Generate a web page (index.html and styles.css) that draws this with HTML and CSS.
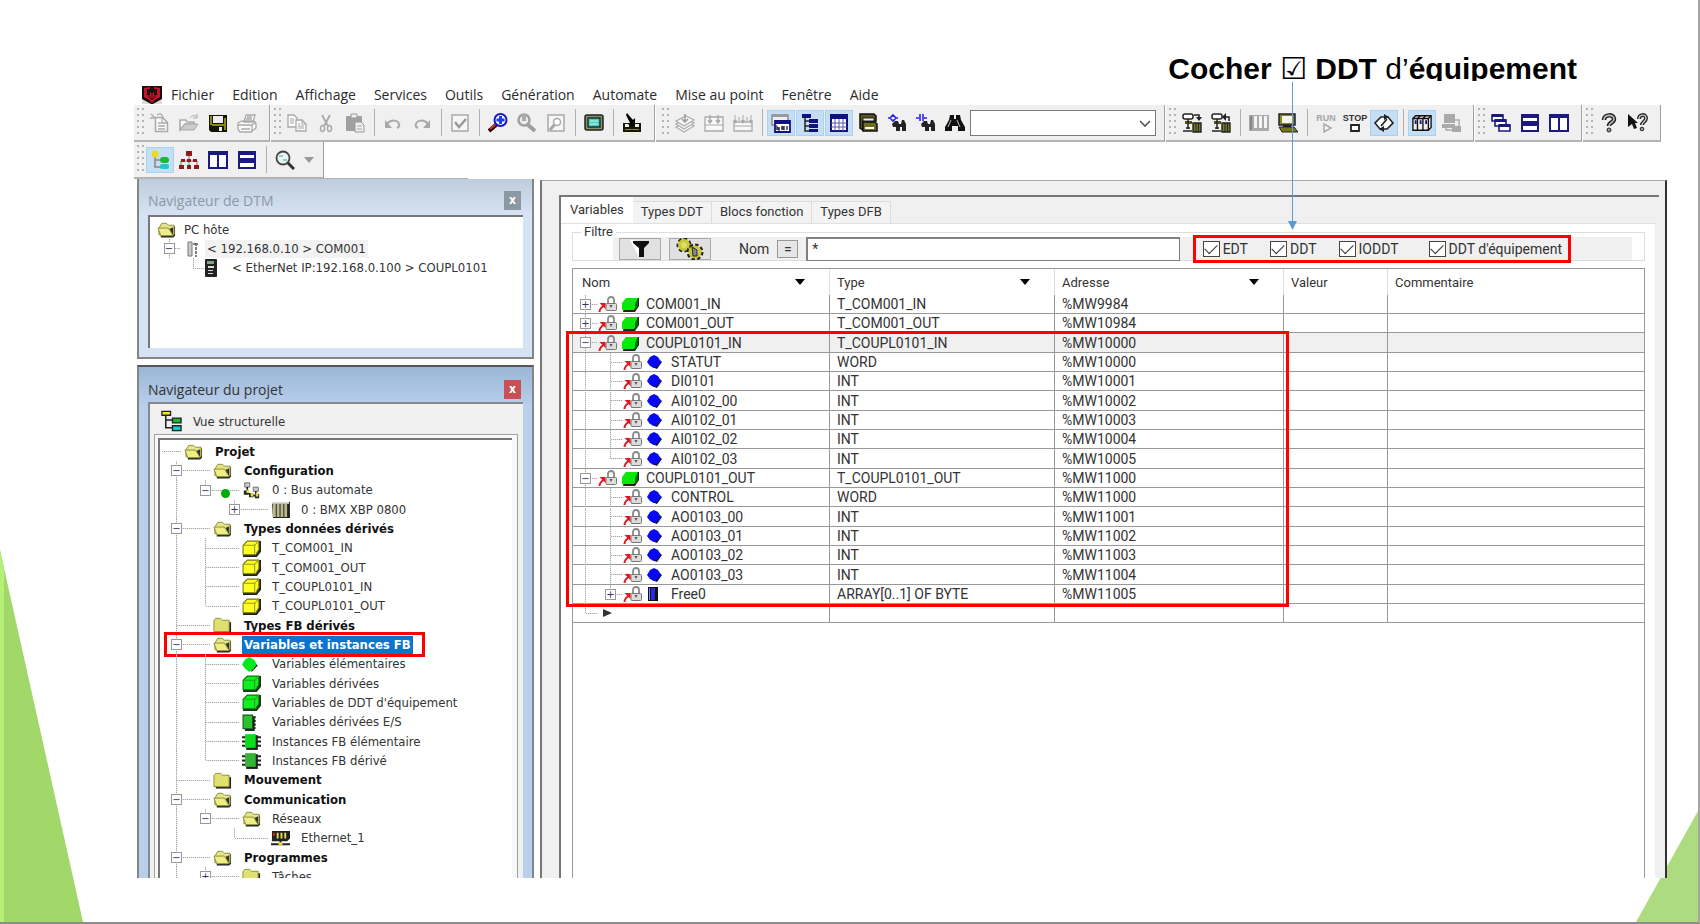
FILE: index.html
```html
<!DOCTYPE html>
<html lang="fr">
<head>
    <meta charset="UTF-8">
    <meta name="viewport" content="width=device-width, initial-scale=1.0">
    <title>Variables DDT</title>
    <link rel="stylesheet" href="styles.css">
</head>
<body>

    <!-- icon set -->
    <svg class="defs" aria-hidden="true">
        <symbol id="logo" viewBox="0 0 20 18"><path fill="#ddd" d="M0 0h20v18H0z"/><path fill="#181010" d="M0 0h20v13l-9 5h-2L0 13z"/><path fill="#c4152a" d="M2 2l6-1v2H5v6h3V6l2 2 2-2v3h3V3h-3V1l6 1v9l-5 3-3 3-3-3-5-3z"/><path stroke="#3c0b10" fill="none" d="M7 4v7l3 3 3-3V4M10 8v6"/></symbol>
        <symbol id="new" viewBox="0 0 20 20"><path fill="#fafafa" stroke="#a9a9a9" stroke-width="1.5" d="M5.500 4.500h7l5 5v9h-12z"/><path fill="none" stroke="#a9a9a9" stroke-width="1.300" d="M12 5v5h5M8 10h3M8 13h7M8 16h7M1 1l4 4M0 5h4M7 2c3-2 5-1 6 2"/></symbol>
        <symbol id="open" viewBox="0 0 20 20"><path fill="#fafafa" stroke="#a9a9a9" stroke-width="1.500" d="M1 17V7h6l1 2h7v2H6z"/><path fill="#ccc" stroke="#a9a9a9" d="M1 17l5-6h13l-4 6z"/><path fill="none" stroke="#a9a9a9" d="M11 5c2-3 5-3 7-1m0-3v4h-4"/></symbol>
        <symbol id="save" viewBox="0 0 20 20"><path fill="#141400" d="M1 2h18v17H3l-2-2z"/><path fill="#8a8a1c" d="M2 3h2v9H2zM16 5h2v12h-2zM4 11h12v2H4z"/><path fill="#eee" d="M5 3h10v7H5zM11 14h3v4h-3z"/></symbol>
        <symbol id="print" viewBox="0 0 20 20"><path fill="#fafafa" stroke="#a9a9a9" stroke-width="1.300" d="M7 9l2-7h9l-2 7zM1 10l4-2h12l2 3v4l-5 4H3l-2-3z"/><path fill="none" stroke="#a9a9a9" stroke-width="1.300" d="M10 4h5M9 6h6M1 12h14l4-3M4 16h9M15 12v6"/></symbol>
        <symbol id="copy" viewBox="0 0 20 20"><path fill="#fafafa" stroke="#a9a9a9" stroke-width="1.300" d="M1 2h6l3 3v9H1z"/><path fill="none" stroke="#a9a9a9" d="M3 6h4M3 8h4M3 10h4"/><path fill="#fafafa" stroke="#a9a9a9" stroke-width="1.300" d="M9 7h6l4 4v7H9z"/><path fill="none" stroke="#a9a9a9" d="M15 7v4h4M11 11h2M11 13h6M11 15h6"/></symbol>
        <symbol id="cut" viewBox="0 0 20 20"><path fill="none" stroke="#a9a9a9" stroke-width="1.800" d="M6 2l6 11M14 2L8 13"/><ellipse cx="6.500" cy="15.500" rx="2" ry="3" fill="none" stroke="#a9a9a9" stroke-width="1.500"/><ellipse cx="13.500" cy="15.500" rx="2" ry="3" fill="none" stroke="#a9a9a9" stroke-width="1.500"/></symbol>
        <symbol id="paste" viewBox="0 0 20 20"><rect x="1" y="3" width="16" height="15" rx="1" fill="#a0a0a0"/><path fill="#eee" stroke="#999" d="M6 1h6v4H6zM10 9h6l3 3v7h-9z"/><path stroke="#aaa" d="M12 13h5M12 16h5"/></symbol>
        <symbol id="undo" viewBox="0 0 20 20"><path fill="none" stroke="#a9a9a9" stroke-width="2" d="M4 11c4-5 11-4 12 0 1 2 0 3-2 4"/><path fill="#a9a9a9" d="M2 7v8h7z"/></symbol>
        <symbol id="redo" viewBox="0 0 20 20"><path fill="none" stroke="#a9a9a9" stroke-width="2" d="M16 11C12 6 5 7 4 11c-1 2 0 3 2 4"/><path fill="#a9a9a9" d="M18 7v8h-7z"/></symbol>
        <symbol id="valid" viewBox="0 0 20 20"><path fill="#f6f6f6" stroke="#a9a9a9" stroke-width="1.500" d="M2 2h16v16H2z"/><path fill="none" stroke="#999" stroke-width="2.500" d="M5 9l4 5 7-8"/></symbol>
        <symbol id="zoomin" viewBox="0 0 20 20"><path stroke="#200" stroke-width="4" d="M1 18l8-7"/><path stroke="#c33" stroke-width="2" d="M2 16l6-5"/><circle cx="12.500" cy="7" r="6" fill="#fff" stroke="#1414c8" stroke-width="2"/><path stroke="#1a3cff" stroke-width="3" d="M12.500 3v8M8.500 7h8"/></symbol>
        <symbol id="zoomoff" viewBox="0 0 20 20"><path stroke="#a0a0a0" stroke-width="4" d="M10 11l8 7"/><circle cx="7" cy="7" r="5.500" fill="#eee" stroke="#a0a0a0" stroke-width="2.500"/><path fill="#aaa" d="M5 1h4v7H5z"/></symbol>
        <symbol id="zoompage" viewBox="0 0 20 20"><path fill="#f6f6f6" stroke="#a9a9a9" stroke-width="1.500" d="M2 2h16v16H2z"/><path stroke="#a9a9a9" stroke-width="3" d="M4 17l5-6"/><circle cx="11" cy="9" r="3.500" fill="#fff" stroke="#a9a9a9" stroke-width="1.500"/></symbol>
        <symbol id="screen" viewBox="0 0 20 20"><rect x="1" y="2" width="18" height="15" rx="2" fill="#8f8f66" stroke="#222" stroke-width="1.500"/><path fill="#58c8b8" stroke="#0a3a3a" stroke-width="1.500" d="M4 5h12v9H4z"/><path stroke="#bff" d="M6 8h8M6 11h8"/></symbol>
        <symbol id="download" viewBox="0 0 20 20"><path fill="#171700" d="M1 10h18v9H1z"/><path fill="#f0f0f0" d="M3 11h4v3H3zM13 11h4v3h-4z"/><path fill="#8a8a2c" d="M3 16h14v1H3z"/><path fill="#000" d="M5 0l6 7 2-2v8l-7-1 2-2-4-8z"/></symbol>
        <symbol id="layers" viewBox="0 0 20 20"><g fill="#f8f8f8" stroke="#aaa" stroke-width="1.200"><path d="M1 14l10-5 8 4-10 6z"/><path d="M1 11l10-5 8 4-10 6z"/><path d="M1 8l10-5 8 4-10 6z"/></g><path fill="none" stroke="#999" stroke-width="1.500" d="M10 1v7M7 6l3 3 3-3"/></symbol>
        <symbol id="import1" viewBox="0 0 20 20"><path fill="#f8f8f8" stroke="#aaa" stroke-width="1.300" d="M1 4h18v14H1z"/><path stroke="#aaa" d="M1 12h18"/><path fill="none" stroke="#aaa" stroke-width="1.500" d="M6 2v7M4 7l2 3 2-3M14 2v7M12 7l2 3 2-3"/></symbol>
        <symbol id="import2" viewBox="0 0 20 20"><path fill="#f8f8f8" stroke="#aaa" stroke-width="1.300" d="M1 9h18v9H1z"/><path stroke="#aaa" d="M1 13h18M2 2v8M10 2v8M18 2v8M6 4v4M14 4v4"/><path fill="#aaa" d="M0 7h4l-2 4zM8 7h4l-2 4zM16 7h4l-2 4z"/></symbol>
        <symbol id="win" viewBox="0 0 20 20"><path fill="#eee" stroke="#888" stroke-width="1.400" d="M1 2h16v10H1z"/><path fill="#999" d="M1 2h16v2H1z"/><path fill="#fff" stroke="#101080" stroke-width="1.800" d="M4 8h15v11H4z"/><path fill="#101080" d="M4 8h15v3H4z"/><path fill="none" stroke="#333" stroke-width="1.500" d="M6 17v-3l2 3v-3M11 17v-4l2 4v-4M16 17v-4"/></symbol>
        <symbol id="arbo" viewBox="0 0 20 20"><path fill="#101080" d="M2 1h9v4H2zM9 6h9v4H9zM9 11h9v4H9zM9 16h9v3H9z"/><path fill="none" stroke="#222" stroke-width="1.500" d="M5 5v13h4M5 8h4M5 13h4"/></symbol>
        <symbol id="grid" viewBox="0 0 20 20"><path fill="#fff" stroke="#101080" stroke-width="2" d="M2 2h16v16H2z"/><path fill="#101080" d="M2 2h16v4H2z"/><path stroke="#5a5ab0" d="M2 10h16M2 14h16M6 6v12M10 6v12M14 6v12"/></symbol>
        <symbol id="books" viewBox="0 0 20 20"><path fill="#55551c" stroke="#111" stroke-width="1.500" d="M2 1h14l2 2v5H5v9L2 15z"/><path fill="#eee" stroke="#222" d="M5 5h11v3H5z"/><path fill="#6d6d22" stroke="#111" stroke-width="1.500" d="M5 9h12l2 2v7H5z"/><path fill="#fff" d="M7 14h9v2H7z"/></symbol>
        <symbol id="find1" viewBox="0 0 20 20"><path fill="none" stroke="#2525ee" stroke-width="1.600" d="M1 5h2l3-3 3 3h2M3 5l3 3 3-3"/><path fill="#222" d="M5 11l3-3h3l1 3h2l1-4h2l2 4v7h-4v-4h-2v4H9v-4H6z"/></symbol>
        <symbol id="find2" viewBox="0 0 20 20"><path fill="none" stroke="#2525ee" stroke-width="1.600" d="M0 5h3M4 1v7M7 1v7M8 5h3"/><path fill="#222" d="M5 11l3-3h3l1 3h2l1-4h2l2 4v7h-4v-4h-2v4H9v-4H6z"/></symbol>
        <symbol id="bino" viewBox="0 0 20 20"><path fill="#111" d="M5 2h4v4h2V2h4l1 5 4 7v4h-7v-5H7v5H0v-4l4-7z"/><path stroke="#bbb" d="M6 7l-3 7M12 7l3 7"/></symbol>
        <symbol id="net1" viewBox="0 0 20 20"><rect x="1" y="1" width="10" height="5" rx="2" fill="#fff" stroke="#222" stroke-width="1.500"/><path fill="#55551c" d="M3 8h7v3H3z"/><path fill="none" stroke="#222" stroke-width="1.500" d="M6 6v10M1 18h9M4 15h4M12 2h5v5"/><path fill="#222" d="M14 4h6l-3 4z"/><path fill="#77772a" stroke="#222" stroke-width="1.400" d="M11 10h8v9h-8z"/><path stroke="#222" d="M14 10v9M16.500 10v9"/></symbol>
        <symbol id="net2" viewBox="0 0 20 20"><rect x="1" y="1" width="10" height="5" rx="2" fill="#fff" stroke="#222" stroke-width="1.500"/><path fill="#55551c" d="M3 8h7v3H3z"/><path fill="none" stroke="#222" stroke-width="1.500" d="M6 6v10M1 18h9M4 15h4M13 4h5v4"/><path fill="#222" d="M15 0v8l-4-4z"/><path fill="#77772a" stroke="#222" stroke-width="1.400" d="M11 10h8v9h-8z"/><path stroke="#222" d="M14 10v9M16.500 10v9"/></symbol>
        <symbol id="bars" viewBox="0 0 20 20"><path fill="#aaa" d="M0 2h20v16H0z"/><path fill="#f4f4f4" d="M5 3h3v12H5zM10 3h3v12h-3zM15 3h3v12h-3z"/><path fill="#888" d="M1 3h2v14H1z"/></symbol>
        <symbol id="pc" viewBox="0 0 20 20"><path fill="#8a8a14" stroke="#222" stroke-width="1.500" d="M1 1h16v11H1z"/><path fill="#f6f6e8" d="M4 3h10v7H4z"/><path fill="#77771a" stroke="#222" d="M1 14h15l4 5H4z"/><path fill="#222" d="M5 12h8v2H5z"/></symbol>
        <symbol id="play" viewBox="0 0 20 10"><path fill="#f6f6f6" stroke="#aaa" stroke-width="1.500" d="M8 1l7 4-7 4z"/></symbol>
        <symbol id="stop" viewBox="0 0 20 10"><path fill="#fff" stroke="#222" stroke-width="1.800" d="M6 2h8v6H6z"/></symbol>
        <symbol id="sync" viewBox="0 0 20 20"><path fill="#fff" stroke="#222" stroke-width="1.600" d="M8 16H6l-5-6 6-6h4M12 4h2l5 6-6 6H9M7 13l6-7"/><path fill="#222" d="M10 1l5 3-5 3zM10 13l-5 3 5 3z"/></symbol>
        <symbol id="rack" viewBox="0 0 22 20"><path fill="#eee" stroke="#111" stroke-width="1.500" d="M1 5l3-3h17v13l-3 3H1z"/><path fill="none" stroke="#111" stroke-width="1.500" d="M1 5h17v13M6 5v13M12 5v13M18 5l3-3M6 5l3-3M12 5l3-3"/><path stroke="#101080" stroke-width="2" d="M4 7v4M9.500 7v4M15.500 7v4"/></symbol>
        <symbol id="pcoff" viewBox="0 0 20 20"><path fill="#aaa" d="M3 1h11v9H3zM1 11h13v4H1zM11 13h9v6h-9z"/><path fill="none" stroke="#aaa" stroke-width="1.500" d="M14 7h4v6M5 14v3h6"/></symbol>
        <symbol id="cascade" viewBox="0 0 20 20"><g fill="#fff" stroke="#1a1a80" stroke-width="1.600"><path d="M1 2h11v6H1z"/><path d="M4 7h11v6H4z"/><path d="M8 12h11v6H8z"/></g><path fill="#1a1a80" d="M1 1h11v3H1zM4 6h11v3H4zM8 11h11v3H8z"/></symbol>
        <symbol id="tileh" viewBox="0 0 20 20"><path fill="#fff" stroke="#1a1a80" stroke-width="2" d="M2 2h16v7H2zM2 11h16v7H2z"/><path fill="#1a1a80" d="M2 2h16v3H2zM2 10h16v3H2z"/></symbol>
        <symbol id="tilev" viewBox="0 0 20 20"><path fill="#fff" stroke="#1a1a80" stroke-width="2" d="M1 2h9v16H1zM10 2h9v16h-9z"/><path fill="#1a1a80" d="M1 1h18v4H1z"/></symbol>
        <symbol id="help" viewBox="0 0 20 20"><path fill="none" stroke="#222" stroke-width="4.500" d="M5 7c0-6 10-6 10-1 0 4-5 3-5 7"/><path fill="none" stroke="#bbb" stroke-width="1.600" d="M5 7c0-6 10-6 10-1 0 4-5 3-5 7"/><circle cx="10" cy="17" r="2" fill="#999" stroke="#222"/></symbol>
        <symbol id="helpptr" viewBox="0 0 20 20"><path fill="none" stroke="#222" stroke-width="4" d="M11 6c0-5 7-5 7-1 0 4-4 4-4 7"/><path fill="none" stroke="#ccc" stroke-width="1.400" d="M11 6c0-5 7-5 7-1 0 4-4 4-4 7"/><circle cx="14" cy="16" r="1.800" fill="#999" stroke="#222"/><path fill="#111" d="M0 1l10 9H7l2 5-3 1-2-5-4 3z"/></symbol>
        <symbol id="vtree" viewBox="0 0 20 20"><path fill="none" stroke="#888" stroke-width="1.500" d="M5 5v12h6M5 10h6"/><circle cx="5" cy="4" r="3.500" fill="#e8dc1c"/><rect x="10" y="7" width="9" height="6" rx="3" fill="#18b838"/><rect x="10" y="14" width="9" height="5" rx="2" fill="#1cc8c8"/></symbol>
        <symbol id="org" viewBox="0 0 20 20"><path fill="none" stroke="#777" d="M10 5v12M2 11h16M2 11v6M18 11v6"/><path fill="#981818" d="M7 1h6v5H7zM2 9h4v3H2zM8 9h4v3H8zM14 9h4v3h-4zM0 15h5v4H0zM8 15h4v4H8zM15 15h5v4h-5z"/></symbol>
        <symbol id="loupe" viewBox="0 0 20 20"><path stroke="#333" stroke-width="3" d="M12 12l7 7"/><circle cx="8" cy="8" r="6.500" fill="#eaf6f4" stroke="#444" stroke-width="1.800"/><path stroke="#3aa" stroke-width="1.200" d="M4 6h4M8 10h4"/></symbol>
        <symbol id="folder" viewBox="0 0 20 17"><path fill="#222" d="M4 5h15v10l-2 2H4z"/><path fill="#e4e48a" stroke="#8d8d3a" d="M2 7l3-5h5l2 2h6v10H2z"/><path fill="#333" d="M13 8l4 7V6z"/><path fill="#eeee84" stroke="#8d8d3a" d="M1 7h11l5 8H4z"/></symbol>
        <symbol id="closed" viewBox="0 0 20 17"><path fill="#222" d="M3 5h16v12H3z"/><path fill="#e0e070" stroke="#8d8d3a" d="M1 15V3l2-2h5l2 2h7v12z"/></symbol>
        <symbol id="bus" viewBox="0 0 20 20"><path fill="#ccc" stroke="#666" d="M2 1h6v5H2zM12 6h6v5h-6z"/><path fill="none" stroke="#222" stroke-width="2" d="M5 6v7l6 3h7M15 11v4"/><path fill="#222" d="M1 10h5v5H1zM7 13h5v5H7zM14 14h5v5h-5z"/><path fill="#dd3" d="M4 9h3v4H4zM9 13h3v4H9zM15 13h3v4h-3z"/></symbol>
        <symbol id="module" viewBox="0 0 20 18"><path fill="#222" d="M1 1h19v17H2z"/><path fill="#b9b98a" d="M2 3h3v14H2zM6 3h3v14H6zM10 3h3v14h-3zM14 3h3v14h-3z"/><path fill="#ddd" d="M1 1h18v2H1z"/></symbol>
        <symbol id="ycube" viewBox="0 0 18 16"><path fill="#222" d="M5 1h13v10l-4 5H1V6z"/><path fill="#ff2" stroke="#77771a" d="M1 5l4-4h11v8l-3 5H1z"/><path fill="none" stroke="#99991a" d="M1 5h11l4-4M12 5v9"/></symbol>
        <symbol id="gcube" viewBox="0 0 18 16"><path fill="#183818" d="M5 1h13v10l-4 5H1V6z"/><path fill="#10f020" stroke="#157015" d="M1 5l4-4h11v8l-3 5H1z"/><path fill="none" stroke="#20a020" d="M1 5h11l4-4M12 5v9"/></symbol>
        <symbol id="cube" viewBox="0 0 18 16"><path fill="#222" d="M5 2h13v8l-4 6H2z"/><path fill="#0ae80a" d="M1 7l4-5h12l-2 9-2 3H1z"/><path fill="#067006" d="M14 8l3-6v8l-3 4z"/></symbol>
        <symbol id="gdot" viewBox="0 0 18 16"><path fill="#222" d="M8 3l7 6-6 6z"/><path fill="#0de61a" d="M7 1l5 3 2 4-3 4-4 3-4-3-3-4 3-5z"/></symbol>
        <symbol id="gmod" viewBox="0 0 18 16"><path fill="#222" d="M1 2h11v14H3z"/><path fill="#2bc32b" stroke="#175817" d="M1 1h9v13H1z"/><path stroke="#222" stroke-width="2" stroke-dasharray="2 1.500" d="M12 2v12"/></symbol>
        <symbol id="chip" viewBox="0 0 18 16"><path stroke="#222" stroke-width="2" d="M0 4h18M0 8h18M0 12h18"/><path fill="#222" d="M4 2h11v14H4z"/><path fill="#0cdc1c" d="M3 1h10v13H3z"/></symbol>
        <symbol id="chip2" viewBox="0 0 18 16"><path stroke="#222" stroke-width="2" d="M0 4h18M0 8h18M0 12h18"/><path fill="#222" d="M4 2h11v14H4z"/><path fill="#35b535" d="M3 1h10v13H3z"/></symbol>
        <symbol id="eth" viewBox="0 0 20 16"><path fill="#222" d="M1 0h19v8l-3 3H1z"/><path fill="#e6dc50" d="M6 2h2v6H6zM10 2h2v6h-2zM14 2h2v6h-2z"/><path fill="#e22" d="M2 2h2v3H2z"/><path stroke="#222" stroke-width="2" d="M10 10v5M0 14h20"/><path fill="#dd3" d="M8 12h4v3H8z"/></symbol>
        <symbol id="ports" viewBox="0 0 12 18"><path fill="#ccc" stroke="#777" d="M1 2h4v14H1z"/><path fill="none" stroke="#555" stroke-width="1.500" stroke-dasharray="3 1" d="M9 3v14M6 4h5"/></symbol>
        <symbol id="device" viewBox="0 0 12 18"><rect width="12" height="18" rx="1" fill="#222"/><path fill="#7ca57c" d="M2 2h7v3H2z"/><path fill="#ddd" d="M3 7h6v2H3zM3 11h5v1H3zM3 14h5v1H3z"/></symbol>
        <symbol id="struct" viewBox="0 0 22 22"><path fill="none" stroke="#222" stroke-width="1.600" d="M5 5v13h7M5 10h7"/><path fill="#ee1" stroke="#222" stroke-width="1.400" d="M1 1h9v4H1z"/><path fill="#1b3" stroke="#222" stroke-width="1.400" d="M12 8h9v5h-9z"/><path fill="#1cc" stroke="#222" stroke-width="1.400" d="M12 16h9v5h-9z"/></symbol>
        <symbol id="lock" viewBox="0 0 19 16"><path fill="none" stroke="#8a8a8a" stroke-width="1.800" d="M9.500 8V4c0-4 6-4 6 0v4"/><rect x="7.500" y="7.500" width="10.500" height="7" rx="1" fill="#dcdcdc" stroke="#777"/><path fill="#555" d="M11 9h3l-1.500 3z"/><path fill="none" stroke="#e5141e" stroke-width="2" d="M1 16c0-3 1-4 4-6"/><path fill="#e5141e" d="M1 7h6v6z"/></symbol>
        <symbol id="bdot" viewBox="0 0 16 16"><path fill="#112" d="M9 3l6 5-5 7-5-2z"/><path fill="#0808f4" d="M7 1l4 2 3 5-3 4-4 2-4-2-3-4 3-5z"/></symbol>
        <symbol id="array" viewBox="0 0 16 16"><path fill="#111" d="M1 1h10v14H1z"/><path fill="#2828e8" d="M4 2h4v12H4z"/><path stroke="#88f" d="M2.500 2v12"/></symbol>
        <symbol id="funnel" viewBox="0 0 20 18"><path fill="#fff" d="M0 0h5l4 8v9z"/><path fill="#111" d="M3 1h16v2l-5 5v9H9V8L3 3z"/></symbol>
        <symbol id="gears" viewBox="0 0 30 22"><circle cx="9" cy="7" r="5.500" fill="#dddc72" stroke="#222" stroke-width="4" stroke-dasharray="3 2"/><circle cx="9" cy="7" r="4.500" fill="none" stroke="#c9c832" stroke-width="3"/><circle cx="20" cy="14" r="6.500" fill="#dddc72" stroke="#222" stroke-width="4" stroke-dasharray="3 2"/><circle cx="20" cy="14" r="5" fill="#ddd" stroke="#c9c832" stroke-width="3"/><path fill="#888" stroke="#222" d="M17 9l5 3v6h-4z"/></symbol>
        <symbol id="down" viewBox="0 0 10 6"><path d="M0 0h10L5 6z"/></symbol>
        <symbol id="chev" viewBox="0 0 12 8"><path fill="none" stroke="#555" stroke-width="1.600" d="M1 1l5 5 5-5"/></symbol>
    </svg>

    <div class="slide">
        <svg class="wedge-left" viewBox="0 0 83 372" preserveAspectRatio="none"><path fill="#a2d76a" d="M0 0l83 372H0z"/><path fill="#b4f075" d="M0 0l4 18v354H0z"/></svg>
        <svg class="wedge-right" viewBox="0 0 62 111" preserveAspectRatio="none"><path fill="#addb7f" d="M62 0v111H0z"/></svg>

        <h1 class="note">Cocher <span class="tick">☑</span> DDT <span class="light">d’</span>équipement</h1>

        <div class="app">
            <nav class="menu">
                <svg class="logo"><use href="#logo"/></svg>
                <a href="#">Fichier</a>
                <a href="#">Edition</a>
                <a href="#">Affichage</a>
                <a href="#">Services</a>
                <a href="#">Outils</a>
                <a href="#">Génération</a>
                <a href="#">Automate</a>
                <a href="#">Mise au point</a>
                <a href="#">Fenêtre</a>
                <a href="#">Aide</a>
            </nav>

            <div class="toolbar">
                <div class="group">
                    <span class="grip"></span>
                    <button aria-label="Nouveau"><svg><use href="#new"/></svg></button>
                    <button aria-label="Ouvrir"><svg><use href="#open"/></svg></button>
                    <button aria-label="Enregistrer"><svg><use href="#save"/></svg></button>
                    <button aria-label="Imprimer"><svg><use href="#print"/></svg></button>
                </div>
                <div class="group">
                    <span class="grip"></span>
                    <button aria-label="Copier"><svg><use href="#copy"/></svg></button>
                    <button aria-label="Couper"><svg><use href="#cut"/></svg></button>
                    <button aria-label="Coller"><svg><use href="#paste"/></svg></button>
                    <span class="sep"></span>
                    <button aria-label="Annuler"><svg><use href="#undo"/></svg></button>
                    <button aria-label="Rétablir"><svg><use href="#redo"/></svg></button>
                    <span class="sep"></span>
                    <button aria-label="Valider"><svg><use href="#valid"/></svg></button>
                    <span class="sep"></span>
                    <button aria-label="Zoom avant"><svg><use href="#zoomin"/></svg></button>
                    <button aria-label="Zoom arrière"><svg><use href="#zoomoff"/></svg></button>
                    <button aria-label="Zoom page"><svg><use href="#zoompage"/></svg></button>
                    <span class="sep"></span>
                    <button aria-label="Plein écran"><svg><use href="#screen"/></svg></button>
                    <span class="sep"></span>
                    <button aria-label="Transférer"><svg><use href="#download"/></svg></button>
                </div>
                <div class="group wide">
                    <span class="grip"></span>
                    <button aria-label="Analyser"><svg><use href="#layers"/></svg></button>
                    <button aria-label="Générer"><svg><use href="#import1"/></svg></button>
                    <button aria-label="Regénérer"><svg><use href="#import2"/></svg></button>
                    <span class="sep"></span>
                    <button class="on" aria-label="Fenêtre de sortie"><svg><use href="#win"/></svg></button>
                    <button class="on" aria-label="Navigateur"><svg><use href="#arbo"/></svg></button>
                    <button class="on" aria-label="Editeur de données"><svg><use href="#grid"/></svg></button>
                    <button aria-label="Bibliothèque"><svg><use href="#books"/></svg></button>
                    <button aria-label="Références"><svg><use href="#find1"/></svg></button>
                    <button aria-label="Contacts"><svg><use href="#find2"/></svg></button>
                    <button aria-label="Rechercher"><svg><use href="#bino"/></svg></button>
                    <span class="combo">
                        <select aria-label="Texte à rechercher"><option></option></select>
                        <svg><use href="#chev"/></svg>
                    </span>
                </div>
                <div class="group">
                    <span class="grip"></span>
                    <button aria-label="Connexion"><svg><use href="#net1"/></svg></button>
                    <button aria-label="Déconnexion"><svg><use href="#net2"/></svg></button>
                    <span class="sep"></span>
                    <button aria-label="Mode standard"><svg><use href="#bars"/></svg></button>
                    <button aria-label="Mode simulation"><svg><use href="#pc"/></svg></button>
                    <span class="sep"></span>
                    <button class="run off"><span>RUN</span><svg><use href="#play"/></svg></button>
                    <button class="run"><span>STOP</span><svg><use href="#stop"/></svg></button>
                    <button class="on" aria-label="Animation"><svg><use href="#sync"/></svg></button>
                    <span class="sep"></span>
                    <button class="on" aria-label="Rack"><svg><use href="#rack"/></svg></button>
                    <button aria-label="Poste"><svg><use href="#pcoff"/></svg></button>
                </div>
                <div class="group">
                    <span class="grip"></span>
                    <button aria-label="Cascade"><svg><use href="#cascade"/></svg></button>
                    <button aria-label="Mosaïque horizontale"><svg><use href="#tileh"/></svg></button>
                    <button aria-label="Mosaïque verticale"><svg><use href="#tilev"/></svg></button>
                </div>
                <div class="group">
                    <span class="grip"></span>
                    <button aria-label="Aide"><svg><use href="#help"/></svg></button>
                    <button aria-label="Aide contextuelle"><svg><use href="#helpptr"/></svg></button>
                </div>
            </div>

            <div class="toolbar second">
                <div class="group">
                    <span class="grip"></span>
                    <button class="on" aria-label="Vue structurelle"><svg><use href="#vtree"/></svg></button>
                    <button aria-label="Vue fonctionnelle"><svg><use href="#org"/></svg></button>
                    <button aria-label="Vues côte à côte"><svg><use href="#tilev"/></svg></button>
                    <button aria-label="Vues superposées"><svg><use href="#tileh"/></svg></button>
                    <span class="sep"></span>
                    <button aria-label="Zoom"><svg><use href="#loupe"/></svg></button>
                    <button class="drop" aria-label="Niveau de zoom"><svg><use href="#down"/></svg></button>
                </div>
            </div>

            <div class="main">
                <aside class="dock">
                    <section class="panel dtm">
                        <header><h2>Navigateur de DTM</h2><button aria-label="Fermer">x</button></header>
                        <ul class="tree dtm-tree">
                            <li><svg class="ico"><use href="#folder"/></svg><span class="txt">PC hôte</span></li>
                            <li><span class="g t"><button class="tg">−</button></span><svg class="thin ports"><use href="#ports"/></svg><span class="txt hot">&lt; 192.168.0.10 &gt; COM001</span></li>
                            <li><span class="g"></span><span class="g e"></span><svg class="thin"><use href="#device"/></svg><span class="txt far">&lt; EtherNet IP:192.168.0.100 &gt; COUPL0101</span></li>
                        </ul>
                    </section>

                    <section class="panel project">
                        <header><h2>Navigateur du projet</h2><button aria-label="Fermer">x</button></header>
                        <div class="view">
                            <div class="view-name"><svg><use href="#struct"/></svg>Vue structurelle</div>
                            <div class="frame">
                                <ul class="tree">
                                    <li><span class="lead"></span><svg class="ico"><use href="#folder"/></svg><b class="txt">Projet</b></li>
                                    <li><span class="g t"><button class="tg">−</button></span><span class="lead"></span><svg class="ico"><use href="#folder"/></svg><b class="txt">Configuration</b></li>
                                    <li><span class="g v"></span><span class="g e"><button class="tg">−</button></span><span class="lead dot"></span><svg class="ico"><use href="#bus"/></svg><span class="txt">0 : Bus automate</span></li>
                                    <li><span class="g v"></span><span class="g"></span><span class="g e"><button class="tg">+</button></span><span class="lead"></span><svg class="ico"><use href="#module"/></svg><span class="txt">0 : BMX XBP 0800</span></li>
                                    <li><span class="g t"><button class="tg">−</button></span><span class="lead"></span><svg class="ico"><use href="#folder"/></svg><b class="txt">Types données dérivés</b></li>
                                    <li><span class="g v"></span><span class="g t"></span><span class="lead"></span><svg class="ico"><use href="#ycube"/></svg><span class="txt">T_COM001_IN</span></li>
                                    <li><span class="g v"></span><span class="g t"></span><span class="lead"></span><svg class="ico"><use href="#ycube"/></svg><span class="txt">T_COM001_OUT</span></li>
                                    <li><span class="g v"></span><span class="g t"></span><span class="lead"></span><svg class="ico"><use href="#ycube"/></svg><span class="txt">T_COUPL0101_IN</span></li>
                                    <li><span class="g v"></span><span class="g e"></span><span class="lead"></span><svg class="ico"><use href="#ycube"/></svg><span class="txt">T_COUPL0101_OUT</span></li>
                                    <li><span class="g t"></span><span class="lead"></span><svg class="ico"><use href="#closed"/></svg><b class="txt">Types FB dérivés</b></li>
                                    <li class="boxed"><span class="g t"><button class="tg">−</button></span><span class="lead"></span><svg class="ico"><use href="#folder"/></svg><b class="txt sel">Variables et instances FB</b></li>
                                    <li><span class="g v"></span><span class="g t"></span><span class="lead"></span><svg class="ico"><use href="#gdot"/></svg><span class="txt">Variables élémentaires</span></li>
                                    <li><span class="g v"></span><span class="g t"></span><span class="lead"></span><svg class="ico"><use href="#gcube"/></svg><span class="txt">Variables dérivées</span></li>
                                    <li><span class="g v"></span><span class="g t"></span><span class="lead"></span><svg class="ico"><use href="#gcube"/></svg><span class="txt">Variables de DDT d'équipement</span></li>
                                    <li><span class="g v"></span><span class="g t"></span><span class="lead"></span><svg class="ico"><use href="#gmod"/></svg><span class="txt">Variables dérivées E/S</span></li>
                                    <li><span class="g v"></span><span class="g t"></span><span class="lead"></span><svg class="ico"><use href="#chip"/></svg><span class="txt">Instances FB élémentaire</span></li>
                                    <li><span class="g v"></span><span class="g e"></span><span class="lead"></span><svg class="ico"><use href="#chip2"/></svg><span class="txt">Instances FB dérivé</span></li>
                                    <li><span class="g t"></span><span class="lead"></span><svg class="ico"><use href="#closed"/></svg><b class="txt">Mouvement</b></li>
                                    <li><span class="g t"><button class="tg">−</button></span><span class="lead"></span><svg class="ico"><use href="#folder"/></svg><b class="txt">Communication</b></li>
                                    <li><span class="g v"></span><span class="g e"><button class="tg">−</button></span><span class="lead"></span><svg class="ico"><use href="#folder"/></svg><span class="txt">Réseaux</span></li>
                                    <li><span class="g v"></span><span class="g"></span><span class="g e"></span><span class="lead"></span><svg class="ico"><use href="#eth"/></svg><span class="txt">Ethernet_1</span></li>
                                    <li><span class="g t"><button class="tg">−</button></span><span class="lead"></span><svg class="ico"><use href="#folder"/></svg><b class="txt">Programmes</b></li>
                                    <li><span class="g v"></span><span class="g t"><button class="tg">+</button></span><span class="lead"></span><svg class="ico"><use href="#closed"/></svg><span class="txt">Tâches</span></li>
                                </ul>
                            </div>
                        </div>
                    </section>
                </aside>

                <section class="mdi">
                    <div class="form">
                        <div class="tabs">
                            <button class="active">Variables</button>
                            <button>Types DDT</button>
                            <button>Blocs fonction</button>
                            <button>Types DFB</button>
                        </div>
                        <div class="page">
                            <fieldset>
                                <legend>Filtre</legend>
                                <div class="filter">
                                    <button class="fbtn" aria-label="Filtrer"><svg class="funnel"><use href="#funnel"/></svg></button>
                                    <button class="fbtn" aria-label="Options"><svg class="gears"><use href="#gears"/></svg></button>
                                    <label class="nom" for="nom">Nom</label>
                                    <button class="eq">=</button>
                                    <input type="text" id="nom" value="*">
                                    <div class="checks">
                                        <label><input type="checkbox" checked>EDT</label>
                                        <label><input type="checkbox" checked>DDT</label>
                                        <label><input type="checkbox" checked>IODDT</label>
                                        <label><input type="checkbox" checked>DDT d'équipement</label>
                                    </div>
                                </div>
                            </fieldset>

                            <div class="sheet">
                                <div class="red"></div>
                                <table>
                                    <colgroup><col class="c-nom"><col class="c-type"><col class="c-adr"><col class="c-val"><col></colgroup>
                                    <thead>
                                        <tr>
                                            <th><span>Nom<svg><use href="#down"/></svg></span></th>
                                            <th><span>Type<svg><use href="#down"/></svg></span></th>
                                            <th><span>Adresse<svg><use href="#down"/></svg></span></th>
                                            <th><span>Valeur</span></th>
                                            <th><span>Commentaire</span></th>
                                        </tr>
                                    </thead>
                                    <tbody>
                                        <tr><td><div><span class="g t"><button class="tg">+</button></span><svg class="lock"><use href="#lock"/></svg><svg class="vi"><use href="#cube"/></svg>COM001_IN</div></td><td>T_COM001_IN</td><td>%MW9984</td><td></td><td></td></tr>
                                        <tr><td><div><span class="g t"><button class="tg">+</button></span><svg class="lock"><use href="#lock"/></svg><svg class="vi"><use href="#cube"/></svg>COM001_OUT</div></td><td>T_COM001_OUT</td><td>%MW10984</td><td></td><td></td></tr>
                                        <tr class="current"><td><div><span class="g t"><button class="tg">−</button></span><svg class="lock"><use href="#lock"/></svg><svg class="vi"><use href="#cube"/></svg>COUPL0101_IN</div></td><td>T_COUPL0101_IN</td><td>%MW10000</td><td></td><td></td></tr>
                                        <tr><td><div><span class="g v"></span><span class="g t"></span><svg class="lock"><use href="#lock"/></svg><svg class="vi"><use href="#bdot"/></svg>STATUT</div></td><td>WORD</td><td>%MW10000</td><td></td><td></td></tr>
                                        <tr><td><div><span class="g v"></span><span class="g t"></span><svg class="lock"><use href="#lock"/></svg><svg class="vi"><use href="#bdot"/></svg>DI0101</div></td><td>INT</td><td>%MW10001</td><td></td><td></td></tr>
                                        <tr><td><div><span class="g v"></span><span class="g t"></span><svg class="lock"><use href="#lock"/></svg><svg class="vi"><use href="#bdot"/></svg>AI0102_00</div></td><td>INT</td><td>%MW10002</td><td></td><td></td></tr>
                                        <tr><td><div><span class="g v"></span><span class="g t"></span><svg class="lock"><use href="#lock"/></svg><svg class="vi"><use href="#bdot"/></svg>AI0102_01</div></td><td>INT</td><td>%MW10003</td><td></td><td></td></tr>
                                        <tr><td><div><span class="g v"></span><span class="g t"></span><svg class="lock"><use href="#lock"/></svg><svg class="vi"><use href="#bdot"/></svg>AI0102_02</div></td><td>INT</td><td>%MW10004</td><td></td><td></td></tr>
                                        <tr><td><div><span class="g v"></span><span class="g e"></span><svg class="lock"><use href="#lock"/></svg><svg class="vi"><use href="#bdot"/></svg>AI0102_03</div></td><td>INT</td><td>%MW10005</td><td></td><td></td></tr>
                                        <tr><td><div><span class="g t"><button class="tg">−</button></span><svg class="lock"><use href="#lock"/></svg><svg class="vi"><use href="#cube"/></svg>COUPL0101_OUT</div></td><td>T_COUPL0101_OUT</td><td>%MW11000</td><td></td><td></td></tr>
                                        <tr><td><div><span class="g v"></span><span class="g t"></span><svg class="lock"><use href="#lock"/></svg><svg class="vi"><use href="#bdot"/></svg>CONTROL</div></td><td>WORD</td><td>%MW11000</td><td></td><td></td></tr>
                                        <tr><td><div><span class="g v"></span><span class="g t"></span><svg class="lock"><use href="#lock"/></svg><svg class="vi"><use href="#bdot"/></svg>AO0103_00</div></td><td>INT</td><td>%MW11001</td><td></td><td></td></tr>
                                        <tr><td><div><span class="g v"></span><span class="g t"></span><svg class="lock"><use href="#lock"/></svg><svg class="vi"><use href="#bdot"/></svg>AO0103_01</div></td><td>INT</td><td>%MW11002</td><td></td><td></td></tr>
                                        <tr><td><div><span class="g v"></span><span class="g t"></span><svg class="lock"><use href="#lock"/></svg><svg class="vi"><use href="#bdot"/></svg>AO0103_02</div></td><td>INT</td><td>%MW11003</td><td></td><td></td></tr>
                                        <tr><td><div><span class="g v"></span><span class="g t"></span><svg class="lock"><use href="#lock"/></svg><svg class="vi"><use href="#bdot"/></svg>AO0103_03</div></td><td>INT</td><td>%MW11004</td><td></td><td></td></tr>
                                        <tr><td><div><span class="g v"></span><span class="g e"><button class="tg">+</button></span><svg class="lock"><use href="#lock"/></svg><svg class="vi"><use href="#array"/></svg>Free0</div></td><td>ARRAY[0..1] OF BYTE</td><td>%MW11005</td><td></td><td></td></tr>
                                        <tr><td><div><span class="g e"></span><span class="more"></span></div></td><td></td><td></td><td></td><td></td></tr>
                                    </tbody>
                                </table>
                            </div>
                        </div>
                    </div>
                </section>
            </div>
        </div>

        <div class="arrow"></div>
    </div>

</body>
</html>
```
FILE: styles.css
```css
*, ::before, ::after {
    box-sizing: border-box;
}
body {
    margin: 0;
    font-family: "Open Sans", "Noto Sans", sans-serif;
    font-size: 14px;
    color: #333;
    background: white;
    --vline: repeating-linear-gradient(#a8a8a8 0 1px, #e4e4e4 1px 2px);
    --hline: repeating-linear-gradient(90deg, #a8a8a8 0 1px, #e4e4e4 1px 2px);
}
button, input, select {
    font: inherit;
    color: inherit;
    margin: 0;
    padding: 0;
}
svg {
    flex: none;
    display: block;
}
.defs {
    position: absolute;
    width: 0;
    height: 0;
}

/* slide */
.slide {
    position: relative;
    display: flex;
    flex-direction: column;
    height: 100vh;
    overflow: hidden;
    padding: 0 28px 44px 134px;
    border-right: 2px solid #a6a6a6;
    border-bottom: 2px solid #8c8c8c;
}
.wedge-left, .wedge-right {
    position: absolute;
    bottom: 0;
}
.wedge-left {
    left: 0;
    width: 83px;
    height: 372px;
}
.wedge-right {
    right: 0;
    width: 62px;
    height: 111px;
}
.note {
    flex: none;
    height: 81px;
    margin: 0;
    padding: 52px 93px 0 0;
    overflow: hidden;
    text-align: right;
    white-space: nowrap;
    font-family: "Liberation Sans", sans-serif;
    font-size: 30px;
    line-height: 34px;
    font-weight: bold;
    color: black;
}
.tick {
    font-family: "DejaVu Sans", sans-serif;
    font-weight: normal;
}
.light {
    font-weight: normal;
}
.arrow {
    position: absolute;
    right: 401px;
    top: 82px;
    width: 9px;
    height: 148px;
    background: linear-gradient(#5b9bd5, #5b9bd5) 4px 0 / 1px 140px no-repeat;
}
.arrow::after {
    content: "";
    position: absolute;
    bottom: 0;
    width: 9px;
    height: 9px;
    background: #5b9bd5;
    clip-path: polygon(0 0, 100% 0, 50% 100%);
}
.app {
    flex: 1;
    min-height: 0;
    display: flex;
    flex-direction: column;
    position: relative;
}

/* menu and toolbars */
.menu {
    display: flex;
    align-items: center;
    gap: 18px;
    height: 24px;
    padding: 3px 0 0 8px;
}
.menu a {
    color: #2b2b2b;
    text-decoration: none;
    line-height: 22px;
}
.logo {
    width: 20px;
    height: 18px;
    margin-right: -9px;
}
.toolbar {
    display: flex;
    gap: 1px;
    height: 37px;
    margin-right: 9px;
}
.toolbar.second {
    background: linear-gradient(#b4b4b4, #b4b4b4) 144px 100% / 190px 1px no-repeat;
}
.group {
    flex: none;
    display: flex;
    align-items: center;
    gap: 1px;
    padding: 0 8px 0 3px;
    background: #f0f0f0;
    border-right: 1px solid #a0a0a0;
    border-bottom: 2px solid #b4b4b4;
}
.second .group {
    padding-right: 5px;
}
.group.wide {
    flex: 1;
    padding-left: 6px;
}
.grip {
    width: 8px;
    height: 30px;
    background: radial-gradient(circle at 1px 1px, #b4b4b4 1px, transparent 1px) 0 0 / 5px 6px;
}
.group button {
    display: flex;
    align-items: center;
    justify-content: center;
    width: 28px;
    height: 26px;
    border: 0;
    background: none;
}
.group button svg {
    width: 20px;
    height: 20px;
}
.group button.on {
    background: #c5def3;
    border: 1px solid #a5d3f5;
}
.group button.run {
    flex-direction: column;
    font-family: "Liberation Sans", sans-serif;
    font-size: 9px;
    line-height: 10px;
    font-weight: bold;
}
.group button.run svg {
    height: 10px;
}
.group button.off {
    color: #a5a5a5;
}
.group button.drop {
    width: 18px;
}
.group button.drop svg {
    width: 10px;
    height: 6px;
    fill: #999;
}
.sep {
    width: 8px;
    height: 27px;
    background: linear-gradient(#b0b0b0, #b0b0b0) 4px 0 / 1px 100% no-repeat;
}
.combo {
    position: relative;
    flex: 1;
    height: 26px;
}
.combo select {
    appearance: none;
    width: 100%;
    height: 100%;
    border: 1px solid #7a7a7a;
    border-radius: 0;
    background: white;
}
.combo svg {
    position: absolute;
    right: 5px;
    top: 10px;
    width: 12px;
    height: 8px;
    pointer-events: none;
}

/* docked panels */
.main {
    flex: 1;
    min-height: 0;
    display: flex;
    gap: 6px;
    padding-left: 3px;
    overflow: hidden;
}
.dock {
    flex: none;
    width: 397px;
    display: flex;
    flex-direction: column;
    gap: 6px;
    font-family: "DejaVu Sans Condensed", "Open Sans", sans-serif;
    font-size: 13px;
}
.panel {
    flex: none;
    display: flex;
    flex-direction: column;
    padding: 0 9px 9px;
    border: 2px solid #858585;
}
.dtm {
    height: 180px;
    border-top: 0;
    background: linear-gradient(#bfccdb, #d6e3f4 36px);
}
.project {
    border-top-color: #555;
    background: linear-gradient(#9bb6d6, #b9d0ec 40px);
}
.panel header {
    display: flex;
    align-items: center;
    justify-content: space-between;
    height: 36px;
    padding: 6px 2px 0 0;
}
.project header {
    height: 35px;
    padding-top: 9px;
}
.panel h2 {
    margin: 0;
    font-family: "Open Sans", sans-serif;
    font-size: 14px;
    font-weight: normal;
}
.dtm h2 {
    color: #8b98a6;
}
.panel header button {
    width: 17px;
    height: 19px;
    border: 0;
    background: #c94f55;
    color: white;
    font-size: 12px;
    line-height: 14px;
    font-weight: bold;
}
.panel.dtm header button {
    background: #8c98a2;
}
.tree {
    margin: 0;
    padding: 2px 0 0 2px;
    list-style: none;
    background: white;
    border: 2px solid #777;
    border-right: 0;
    border-bottom: 0;
}
.tree li {
    position: relative;
    display: flex;
    align-items: center;
    height: 19px;
    white-space: nowrap;
}
.tree li:nth-child(3n) {
    height: 20px;
}
.ico {
    width: 19px;
    height: 17px;
}
.txt {
    margin-left: 9px;
    padding: 0 2px;
    line-height: 18px;
}
b.txt {
    margin-left: 10px;
    color: #111;
}
b.txt.sel {
    background: #0a74d0;
    color: white;
}
.dtm-tree {
    flex: 1;
    padding: 3px 0 0 7px;
}
.dtm-tree .txt {
    margin-left: 6px;
}
.dtm-tree .far {
    margin-left: 13px;
}
.dtm-tree .hot {
    background: #f2f2f2;
}
.dtm-tree .g {
    width: 24px;
}
.thin {
    width: 12px;
    height: 18px;
}
.ports {
    margin-left: 6px;
}
.boxed::after {
    content: "";
    position: absolute;
    left: 2px;
    top: -3px;
    width: 261px;
    height: 25px;
    border: 3px solid #f00;
}
.lead {
    width: 22px;
    height: 100%;
    background: var(--hline) 0 50% / 19px 1px no-repeat;
}
.lead.dot {
    position: relative;
}
.lead.dot::after {
    content: "";
    position: absolute;
    left: 1px;
    top: 9px;
    width: 9px;
    height: 9px;
    border-radius: 50%;
    background: #0a0;
}

/* tree guides : v = vertical, t = tee, e = elbow */
.g {
    flex: none;
    display: flex;
    align-items: center;
    justify-content: center;
    width: 29px;
    height: 100%;
}
.g.v {
    background: var(--vline) 50% 0 / 1px 100% no-repeat;
}
.g.t {
    background: var(--vline) 50% 0 / 1px 100% no-repeat, var(--hline) 100% 50% / 50% 1px no-repeat;
}
.g.e {
    background: var(--vline) 50% 0 / 1px 50% no-repeat, var(--hline) 100% 50% / 50% 1px no-repeat;
}
.tg {
    display: flex;
    align-items: center;
    justify-content: center;
    width: 11px;
    height: 11px;
    border: 1px solid #999;
    background: white;
    color: #336;
    font-family: "DejaVu Sans", sans-serif;
    font-size: 10px;
    line-height: 9px;
}
.view {
    background: #f0f0f0;
    border: 2px solid #888;
    border-right: 0;
    padding: 0 5px 6px 4px;
}
.view-name {
    display: flex;
    align-items: center;
    gap: 11px;
    height: 30px;
    padding: 4px 0 0 7px;
}
.view-name svg {
    width: 21px;
    height: 22px;
}
.frame {
    padding: 3px 5px 3px 3px;
    border: 1px solid #a0a0a0;
    background: #f8f8f8;
}

/* data editor */
.mdi {
    flex: 1;
    min-width: 0;
    display: flex;
    margin: 1px 3px 0 0;
    padding: 14px 6px 0 17px;
    background: #f0f0f0;
    border: solid #a8a8a8;
    border-width: 1px 2px 0 2px;
    border-left-color: #777;
    border-right-color: #333;
    font-family: Roboto, sans-serif;
    font-size: 14px;
}
.form {
    flex: 1;
    min-width: 0;
    display: flex;
    flex-direction: column;
    padding-right: 4px;
    border: 2px solid #777;
    border-right: 0;
    border-bottom: 0;
}
.tabs {
    display: flex;
    align-items: flex-end;
    height: 26px;
}
.tabs button {
    height: 22px;
    padding: 0 8px 2px;
    border: 1px solid #ddd;
    border-left: 0;
    border-bottom: 0;
    background: #f3f3f3;
    font-size: 13px;
}
.tabs button.active {
    height: 26px;
    padding: 0 9px 2px;
    border: 0;
    background: white;
}
.page {
    flex: 1;
    display: flex;
    flex-direction: column;
    padding: 1px 10px 0 11px;
    background: white;
    border-top: 1px solid #e0e0e0;
}
fieldset {
    margin: 0;
    padding: 0 12px 0 40px;
    border: 1px solid #ddd;
    min-width: 0;
    height: 36px;
}
legend {
    margin-left: -32px;
    padding: 0 3px;
    font-size: 13px;
    line-height: 14px;
}
.filter {
    display: flex;
    align-items: center;
    height: 23px;
    margin-top: -2px;
    padding-left: 6px;
    background: #f0f0f0;
}
.fbtn {
    display: flex;
    align-items: center;
    justify-content: center;
    width: 42px;
    height: 22px;
    margin-right: 8px;
    border: 1px solid #aaa;
    background: #e1e1e1;
}
.funnel {
    width: 20px;
    height: 18px;
}
.gears {
    width: 30px;
    height: 22px;
}
.nom {
    margin: 0 8px 0 20px;
}
.eq {
    width: 21px;
    height: 18px;
    margin-right: 8px;
    border: 1px solid #999;
    background: #e6e6e6;
    line-height: 14px;
}
#nom {
    flex: 1;
    min-width: 0;
    height: 24px;
    padding: 0 4px;
    border: 2px solid #808080;
    border-right-width: 1px;
    border-bottom-width: 1px;
    background: white;
}
.checks {
    display: flex;
    align-items: center;
    gap: 22px;
    height: 28px;
    margin: 0 61px 0 13px;
    padding: 0 6px 0 7px;
    border: 3px solid #f00;
}
.checks label {
    display: flex;
    align-items: center;
    gap: 3px;
}
.checks label:last-child {
    margin-left: 8px;
}
.checks input {
    appearance: none;
    display: flex;
    justify-content: center;
    width: 17px;
    height: 16px;
    border: 1px solid #444;
    background: white;
}
.checks input:checked::after {
    content: "";
    width: 12px;
    height: 7px;
    margin-top: 2px;
    border: solid #333;
    border-width: 0 0 1px 1px;
    transform: rotate(-45deg);
}
.sheet {
    position: relative;
    flex: 1;
    margin-top: 7px;
    border: 1px solid #999;
    border-bottom: 0;
}
.red {
    position: absolute;
    left: -7px;
    top: 62px;
    width: 723px;
    height: 276px;
    border: 3px solid #f00;
}
table {
    width: 100%;
    table-layout: fixed;
    border-collapse: separate;
    border-spacing: 0;
}
.c-nom {
    width: 257px;
}
.c-type {
    width: 225px;
}
.c-adr {
    width: 229px;
}
.c-val {
    width: 104px;
}
th {
    height: 26px;
    padding: 0 7px;
    border-right: 1px solid #ddd;
    font-size: 13px;
    font-weight: normal;
    text-align: left;
}
th span {
    display: flex;
    align-items: center;
    justify-content: space-between;
    padding-right: 17px;
}
th:first-child {
    padding-left: 9px;
}
th svg {
    width: 10px;
    height: 6px;
}
td {
    height: 19px;
    padding: 0 7px;
    border-right: 1px solid #999;
    border-bottom: 1px solid #999;
    line-height: 18px;
    white-space: nowrap;
}
th:last-child, td:last-child {
    border-right: 0;
}
tr:nth-child(3n) td {
    height: 20px;
}
td:first-child {
    padding: 0;
}
td div {
    display: flex;
    align-items: center;
    height: 18px;
}
td .g {
    width: 25px;
}
.current td {
    background: #f0f0f0;
}
.lock {
    width: 20px;
    height: 16px;
}
.vi {
    width: 18px;
    height: 16px;
    margin: 0 7px 0 3px;
}
.more {
    width: 9px;
    height: 8px;
    margin-left: 5px;
    background: #333;
    clip-path: polygon(0 0, 100% 50%, 0 100%);
}
```
